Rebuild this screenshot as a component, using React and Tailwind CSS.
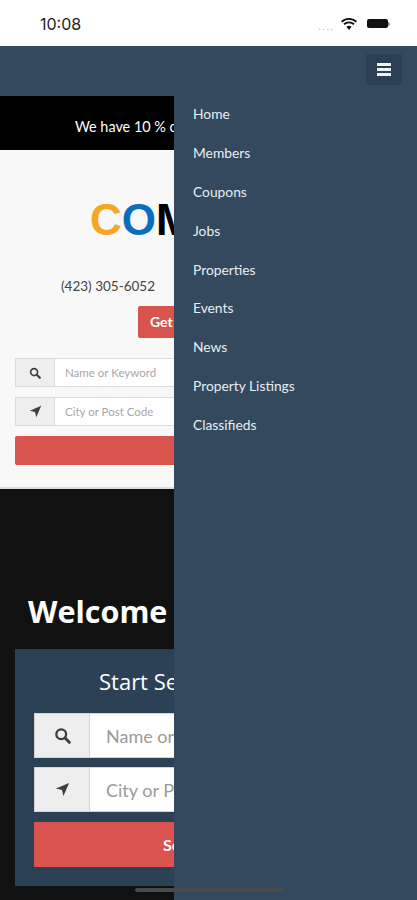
const MENU_ITEMS = ['Home', 'Members', 'Coupons', 'Jobs', 'Properties', 'Events', 'News', 'Property Listings', 'Classifieds']

function SearchIcon({ size }) {
  return (
    <svg width={size} height={size} viewBox="0 0 16 16" fill="none" stroke="#3f3f3f" strokeWidth="2.2" strokeLinecap="round">
      <circle cx="6.8" cy="6.8" r="4.6" />
      <path d="M10.4 10.4 L14.4 14.4" strokeWidth="2.8" />
    </svg>
  )
}

function ArrowIcon({ size }) {
  return (
    <svg width={size} height={size} viewBox="0 0 16 16" fill="#3f3f3f">
      <path d="M15 1 L9 15 L7.4 8.6 L1 7 Z" />
    </svg>
  )
}

function SearchRow({ icon, placeholder, large }) {
  if (large) {
    return (
      <div className="flex h-[45px] w-[345px] border border-[#d4d4d4] bg-white">
        <div className="flex w-[55px] shrink-0 items-center justify-center border-r border-[#d4d4d4] bg-[#eeeeee]">{icon}</div>
        <div className="pl-4 text-[18px] leading-[44px] text-[#9a9a9a]">{placeholder}</div>
      </div>
    )
  }
  return (
    <div className="flex h-[29px] w-[345px] border border-[#dcdcdc] bg-white">
      <div className="flex w-[39px] shrink-0 items-center justify-center border-r border-[#dcdcdc] bg-[#eeeeee]">{icon}</div>
      <div className="pl-[10px] text-[11.5px] leading-[27px] text-[#a8a8a8]">{placeholder}</div>
    </div>
  )
}

export default function App() {
  return (
    <div className="relative flex h-[900px] w-[417px] flex-col overflow-hidden bg-[#111111] font-['Lato',sans-serif]">
      {/* status bar */}
      <div className="flex h-[46px] shrink-0 items-center justify-between bg-white pl-[40px] pr-[27px] pt-[1px]">
        <span className="font-['Inter',sans-serif] text-[16px] font-normal text-[#222222]">10:08</span>
        <div className="flex items-center">
          <span className="mr-[6px] mt-[5px] text-[9px] leading-none tracking-[2px] text-[#b5b5b5]">....</span>
          <svg width="16" height="12" viewBox="0 0 16 12" fill="#111111" className="mr-[10px]">
            <path d="M8 12 L5.4 8.8 A4 4 0 0 1 10.6 8.8 Z" />
            <path d="M3.6 7 L2.4 5.6 A8.4 8.4 0 0 1 13.6 5.6 L12.4 7 A6.6 6.6 0 0 0 3.6 7 Z" />
            <path d="M1.2 4.4 L0 3 A12 12 0 0 1 16 3 L14.8 4.4 A10.2 10.2 0 0 0 1.2 4.4 Z" />
          </svg>
          <div className="flex items-center">
            <div className="h-[9px] w-[21px] rounded-[2px] bg-[#111111]" />
            <div className="h-[4px] w-[2px] rounded-r-sm bg-[#888888]" />
          </div>
        </div>
      </div>

      {/* nav bar */}
      <div className="flex h-[50px] shrink-0 items-start justify-end bg-[#34495e] pr-[15px] pt-[8px]">
        <div className="flex h-[31px] w-[36px] flex-col items-center justify-center gap-[2px] rounded-[2px] bg-[#2d4053]">
          <div className="h-[3px] w-[14px] bg-[#f2f2f2]" />
          <div className="h-[3px] w-[14px] bg-[#f2f2f2]" />
          <div className="h-[3px] w-[14px] bg-[#f2f2f2]" />
        </div>
      </div>

      {/* banner */}
      <div className="flex h-[54px] shrink-0 items-center overflow-hidden whitespace-nowrap bg-black pl-[75px] pt-[8px] text-[14.4px] text-white">
        We have 10 % coupons
      </div>

      {/* header */}
      <div className="flex h-[339px] shrink-0 flex-col border-b-2 border-[#dddddd] bg-[#f8f8f8] pl-[15px]">
        <div className="mt-[46px] whitespace-nowrap pl-[75px] font-['Liberation_Sans',sans-serif] text-[44px] font-bold leading-[48px]">
          <span className="text-[#f5a623]">C</span>
          <span className="text-[#0a6ebd]">O</span>
          <span className="text-black">M</span>
        </div>
        <div className="mt-[32px] pl-[46px] text-[13.5px] leading-[20px] text-[#444444]">(423) 305-6052</div>
        <div className="ml-[123px] mt-[10px] h-[32px] w-[100px] rounded-[2px] bg-[#d9534f] pl-[12px] text-[14px] font-bold leading-[32px] text-white">Get</div>
        <div className="mt-[20px] flex flex-col gap-[10px]">
          <SearchRow icon={<SearchIcon size={12} />} placeholder="Name or Keyword" />
          <SearchRow icon={<ArrowIcon size={13} />} placeholder="City or Post Code" />
        </div>
        <div className="mt-[10px] h-[29px] w-[345px] rounded-[2px] bg-[#d9534f]" />
      </div>

      {/* welcome section */}
      <div className="flex flex-1 flex-col pl-[15px]">
        <h1 className="mt-[102px] whitespace-nowrap pl-[13px] font-['Open_Sans',sans-serif] text-[30.5px] font-bold leading-[40px] [word-spacing:10px] text-white">Welcome to</h1>
        <div className="mt-[18px] flex h-[237px] w-[390px] flex-col bg-[#2d4156] pl-[19px]">
          <div className="mt-[17px] whitespace-nowrap pl-[65px] font-['Open_Sans',sans-serif] text-[22px] leading-[30px] text-white">Start Search</div>
          <div className="mt-[17px] flex flex-col gap-[9px]">
            <SearchRow large icon={<SearchIcon size={17} />} placeholder="Name or Keyword" />
            <SearchRow large icon={<ArrowIcon size={15} />} placeholder="City or Post Code" />
          </div>
          <div className="mt-[10px] h-[45px] w-[345px] bg-[#d9534f] pl-[129px] text-[16px] font-bold leading-[45px] text-white">Search</div>
        </div>
      </div>

      {/* slide-out menu */}
      <div className="absolute bottom-0 left-[174px] right-0 top-[96px] bg-[#34495e] pl-[19px]">
        {MENU_ITEMS.map(item => (
          <div key={item} className="h-[38.9px] text-[13.8px] leading-[35px] text-[#e8edf2]">{item}</div>
        ))}
      </div>

      {/* home indicator */}
      <div className="absolute left-[135px] top-[888px] h-[4px] w-[148px] rounded-full bg-[#4a4a4a]" />
    </div>
  )
}
